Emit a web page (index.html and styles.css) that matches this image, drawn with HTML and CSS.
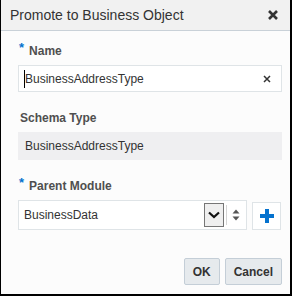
FILE: index.html
```html
<!DOCTYPE html>
<html lang="en">
<head>
    <meta charset="UTF-8">
    <title>Promote to Business Object</title>
    <link rel="stylesheet" href="styles.css">
</head>
<body>
    <div class="dialog">
        <div class="dialog-header">
            <span class="dialog-title">Promote to Business Object</span>
            <span class="close-btn">
                <svg width="10" height="10" viewBox="0 0 10 10"><path d="M1 1 L9 9 M9 1 L1 9" stroke="#333" stroke-width="2.6"/></svg>
            </span>
        </div>

        <div class="dialog-body">
            <div class="field">
                <div class="field-label"><span class="req">*</span>Name</div>
                <div class="text-input">
                    <span class="caret"></span>
                    <span class="value">BusinessAddressType</span>
                    <svg class="clear" width="8" height="8" viewBox="0 0 8 8"><path d="M1 1 L7 7 M7 1 L1 7" stroke="#333" stroke-width="1.5"/></svg>
                </div>
            </div>

            <div class="field">
                <div class="field-label plain">Schema Type</div>
                <div class="readonly">BusinessAddressType</div>
            </div>

            <div class="field">
                <div class="field-label"><span class="req">*</span>Parent Module</div>
                <div class="select-row">
                    <div class="select">
                        <span class="value">BusinessData</span>
                        <span class="drop-btn">
                            <svg width="12" height="8" viewBox="0 0 12 8"><path d="M1 1.5 L6 6 L11 1.5" fill="none" stroke="#111" stroke-width="2.2"/></svg>
                        </span>
                        <span class="sep"></span>
                        <span class="spinner">
                            <svg width="8" height="12" viewBox="0 0 8 12"><path d="M4 0.5 L7.5 4.5 L0.5 4.5 Z M4 11.5 L7.5 7.5 L0.5 7.5 Z" fill="#555"/></svg>
                        </span>
                    </div>
                    <span class="add-btn">
                        <svg width="14" height="14" viewBox="0 0 14 14"><path d="M5 0 H9 V5 H14 V9 H9 V14 H5 V9 H0 V5 H5 Z" fill="#0572ce"/></svg>
                    </span>
                </div>
            </div>
        </div>

        <div class="dialog-footer">
            <button class="btn">OK</button>
            <button class="btn">Cancel</button>
        </div>
    </div>
</body>
</html>
```

FILE: styles.css
```css
body {
    margin: 0;
    font-family: "Liberation Sans", Arial, sans-serif;
}

.dialog {
    width: 292px;
    height: 296px;
    box-sizing: border-box;
    border-left: 1px solid #000;
    border-right: 2px solid #000;
    border-bottom: 2px solid #000;
    background: #fcfcfc;
    display: flex;
    flex-direction: column;
}

.dialog-header {
    height: 30px;
    flex: none;
    background: #f1f1f1;
    border-bottom: 1px solid #c9d1d8;
    display: flex;
    align-items: center;
    justify-content: space-between;
    padding: 0 12px 0 9px;
}

.dialog-title {
    font-size: 14px;
    color: #333;
}

.close-btn {
    display: flex;
}

.dialog-body {
    padding: 12px 8px 0 17px;
}

.field + .field {
    margin-top: 18px;
}

.field-label {
    height: 16px;
    line-height: 16px;
    font-size: 12px;
    font-weight: bold;
    color: #4f4f4f;
    margin-bottom: 6px;
}

.field-label.plain {
    padding-left: 2px;
}

.req {
    color: #0572ce;
    font-size: 13px;
    position: relative;
    top: -3px;
    margin: 0 5px 0 1px;
}

.text-input {
    height: 27px;
    box-sizing: border-box;
    border: 1px solid #dfe4e7;
    background: #fff;
    display: flex;
    align-items: center;
    padding: 0 10px 0 5px;
    font-size: 12px;
    color: #333;
}

.caret {
    width: 1px;
    height: 18px;
    background: #000;
}

.text-input .value {
    flex: 1;
}

.readonly {
    height: 28px;
    line-height: 28px;
    background: #efeff1;
    padding-left: 7px;
    font-size: 12px;
    color: #333;
}

.select-row {
    display: flex;
    align-items: center;
    gap: 5px;
}

.select {
    width: 229px;
    height: 30px;
    box-sizing: border-box;
    border: 1px solid #dfe4e7;
    background: #fff;
    display: flex;
    align-items: center;
    padding: 0 5px 0 5px;
    font-size: 12px;
    color: #333;
}

.select .value {
    flex: 1;
}

.drop-btn {
    width: 20px;
    height: 24px;
    box-sizing: border-box;
    border: 1px solid #767676;
    background: #efefef;
    display: flex;
    align-items: center;
    justify-content: center;
}

.sep {
    width: 1px;
    height: 20px;
    background: #d4d4d4;
    margin: 0 5px 0 2px;
}

.spinner {
    display: flex;
    margin-right: 1px;
}

.add-btn {
    width: 29px;
    height: 28px;
    box-sizing: border-box;
    border: 1px solid #dfe4e7;
    background: #fff;
    display: flex;
    align-items: center;
    justify-content: center;
    margin-top: 2px;
}

.dialog-footer {
    margin-top: auto;
    display: flex;
    justify-content: flex-end;
    gap: 5px;
    padding: 0 8px 9px 0;
}

.btn {
    height: 27px;
    box-sizing: border-box;
    padding: 0 8px;
    border: 1px solid #c4ced7;
    border-radius: 2px;
    background: #e6eaed;
    font-family: "Liberation Sans", Arial, sans-serif;
    font-size: 12px;
    font-weight: bold;
    color: #333;
}
```
